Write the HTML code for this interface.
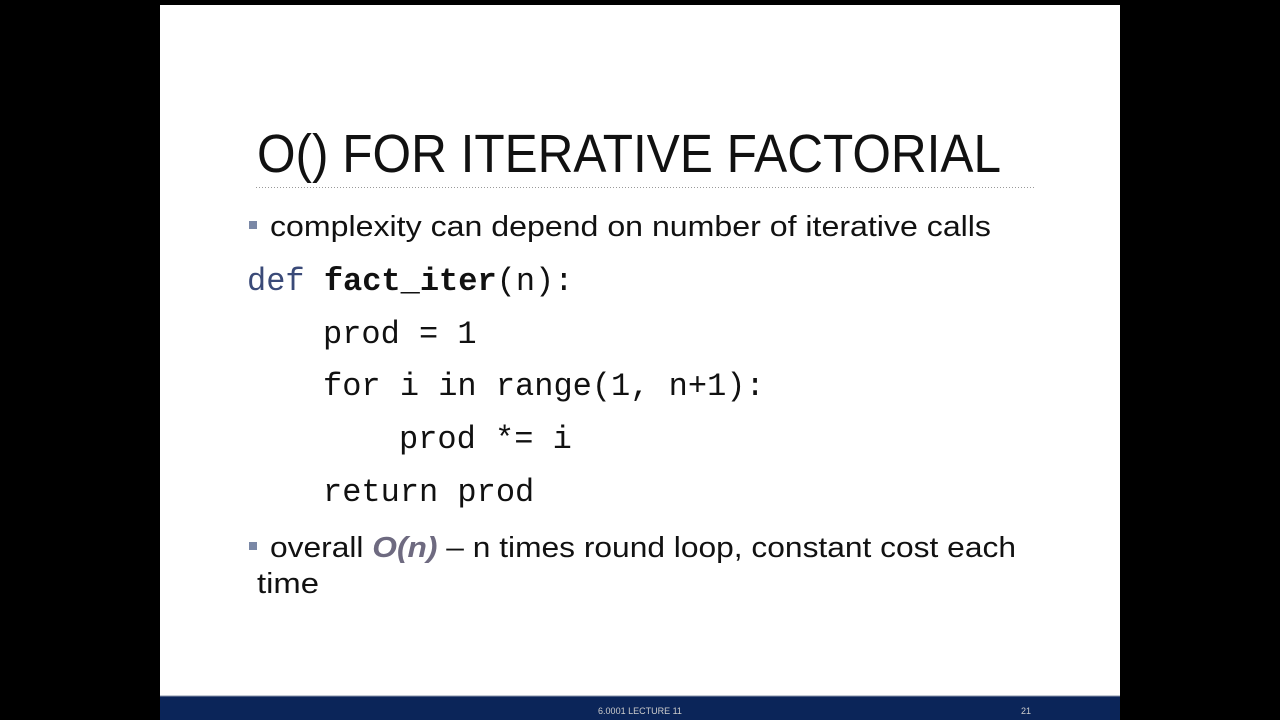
<!DOCTYPE html>
<html><head><meta charset="utf-8"><style>
html,body{margin:0;padding:0;background:#000;width:1280px;height:720px;overflow:hidden}
svg{display:block}
.t{font-family:"Liberation Sans",sans-serif;fill:#111}
.m{font-family:"Liberation Mono",monospace;font-size:32px;fill:#111}
</style></head><body>
<svg width="1280" height="720" xmlns="http://www.w3.org/2000/svg">
<rect x="0" y="0" width="1280" height="720" fill="#000"/>
<rect x="160" y="5" width="960" height="691" fill="#fff"/>
<rect x="160" y="696" width="960" height="24" fill="#0b2559"/>
<line x1="160" y1="696" x2="1120" y2="696" stroke="#8a94aa" stroke-width="1"/>
<text class="t" x="257" y="172" font-size="54" textLength="744" lengthAdjust="spacingAndGlyphs">O() FOR ITERATIVE FACTORIAL</text>
<line x1="256" y1="187.5" x2="1036" y2="187.5" stroke="#999" stroke-width="1" stroke-dasharray="1,2"/>
<rect x="249" y="221" width="8" height="8" fill="#7a88a6"/>
<text class="t" x="270" y="236" font-size="29" textLength="721" lengthAdjust="spacingAndGlyphs">complexity can depend on number of iterative calls</text>
<text class="m" x="247" y="290"><tspan fill="#3a4a78">def</tspan> <tspan font-weight="bold">fact_iter</tspan>(n):</text>
<text class="m" x="323" y="343">prod = 1</text>
<text class="m" x="323" y="395">for i in range(1, n+1):</text>
<text class="m" x="399" y="448">prod *= i</text>
<text class="m" x="323" y="501">return prod</text>
<rect x="249" y="542" width="8" height="8" fill="#7a88a6"/>
<text class="t" x="270" y="557" font-size="29" textLength="746" lengthAdjust="spacingAndGlyphs">overall <tspan fill="#6e6a80" font-weight="bold" font-style="italic">O(n)</tspan> – n times round loop, constant cost each</text>
<text class="t" x="257" y="593" font-size="29" textLength="62" lengthAdjust="spacingAndGlyphs">time</text>
<text class="t" x="640" y="714" font-size="9" fill="#ccc" style="fill:#ccc" text-anchor="middle">6.0001 LECTURE 11</text>
<text class="t" x="1026" y="714" font-size="9" style="fill:#ccc" text-anchor="middle">21</text>
</svg>
</body></html>
